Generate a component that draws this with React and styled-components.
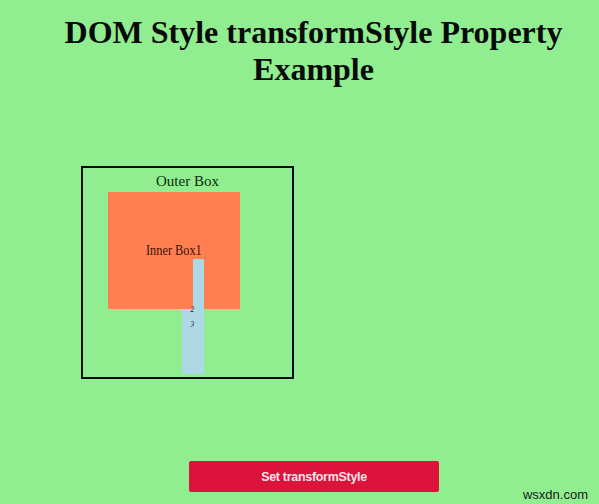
import React from "react";
import styled, { createGlobalStyle } from "styled-components";

const Global = createGlobalStyle`
  html, body { margin: 0; padding: 0; background: #90ee90; }
  body { width: 599px; height: 504px; overflow: hidden; font-family: "Liberation Serif", "Times New Roman", serif; }
`;

const Page = styled.div`
  position: relative;
  width: 599px;
  height: 504px;
  display: flex;
  flex-direction: column;
`;

const Title = styled.h1`
  margin: 14px 0 0 28px;
  font-family: "Liberation Serif", "Times New Roman", serif;
  font-weight: bold;
  font-size: 32px;
  line-height: 37px;
  text-align: center;
  color: #0a0a0a;
`;

const OuterBox = styled.div`
  position: relative;
  margin: 78px 0 0 81px;
  width: 209px;
  height: 209px;
  border: 2px solid #0a0a0a;
  display: flex;
  flex-direction: column;
`;

const OuterLabel = styled.div`
  font-size: 15px;
  line-height: 17px;
  text-align: center;
  margin-top: 5px;
  color: #0b2a0b;
`;

const InnerBox = styled.div`
  margin: 2px 0 0 25px;
  width: 132px;
  height: 117px;
  background: #ff7f50;
  display: flex;
  justify-content: flex-start;
`;

const InnerLabel = styled.span`
  margin: 51px 0 0 38px;
  font-size: 14px;
  line-height: 16px;
  color: #3c0f0a;
  transform: scaleX(0.88);
  transform-origin: left top;
  white-space: nowrap;
  height: 16px;
`;

const Bar = styled.div`
  position: absolute;
  left: ${(p) => p.$left}px;
  top: ${(p) => p.$top}px;
  width: ${(p) => p.$w}px;
  height: ${(p) => p.$h}px;
  background: #add8e6;
`;

const Glyph = styled.span`
  position: absolute;
  left: ${(p) => p.$left}px;
  top: ${(p) => p.$top}px;
  font-size: 9px;
  line-height: 10px;
  font-style: italic;
  color: #1a1a1a;
  transform: scaleX(0.8);
`;

const ButtonRow = styled.div`
  margin-top: auto;
  margin-bottom: 12px;
  display: flex;
  padding-left: 189px;
`;

const Button = styled.button`
  width: 250px;
  height: 31px;
  border: none;
  border-radius: 2px;
  background: #dc143c;
  color: #fbe3ea;
  font-family: "Liberation Sans", Arial, sans-serif;
  font-weight: bold;
  font-size: 12.5px;
  letter-spacing: -0.3px;
  cursor: pointer;
`;

const Watermark = styled.div`
  position: absolute;
  right: 11px;
  bottom: 2px;
  font-family: "Liberation Sans", Arial, sans-serif;
  font-size: 13px;
  color: #1a1a1a;
`;

export default function App() {
  return (
    <Page>
      <Global />
      <Title>DOM Style transformStyle Property Example</Title>
      <OuterBox>
        <OuterLabel>Outer Box</OuterLabel>
        <InnerBox>
          <InnerLabel>Inner Box1</InnerLabel>
        </InnerBox>
        <Bar $left={110} $top={91} $w={11} $h={51} />
        <Bar $left={99} $top={141} $w={22} $h={65} />
        <Glyph $left={107} $top={136}>2</Glyph>
        <Glyph $left={107} $top={151}>3</Glyph>
      </OuterBox>
      <ButtonRow>
        <Button>Set transformStyle</Button>
      </ButtonRow>
      <Watermark>wsxdn.com</Watermark>
    </Page>
  );
}
